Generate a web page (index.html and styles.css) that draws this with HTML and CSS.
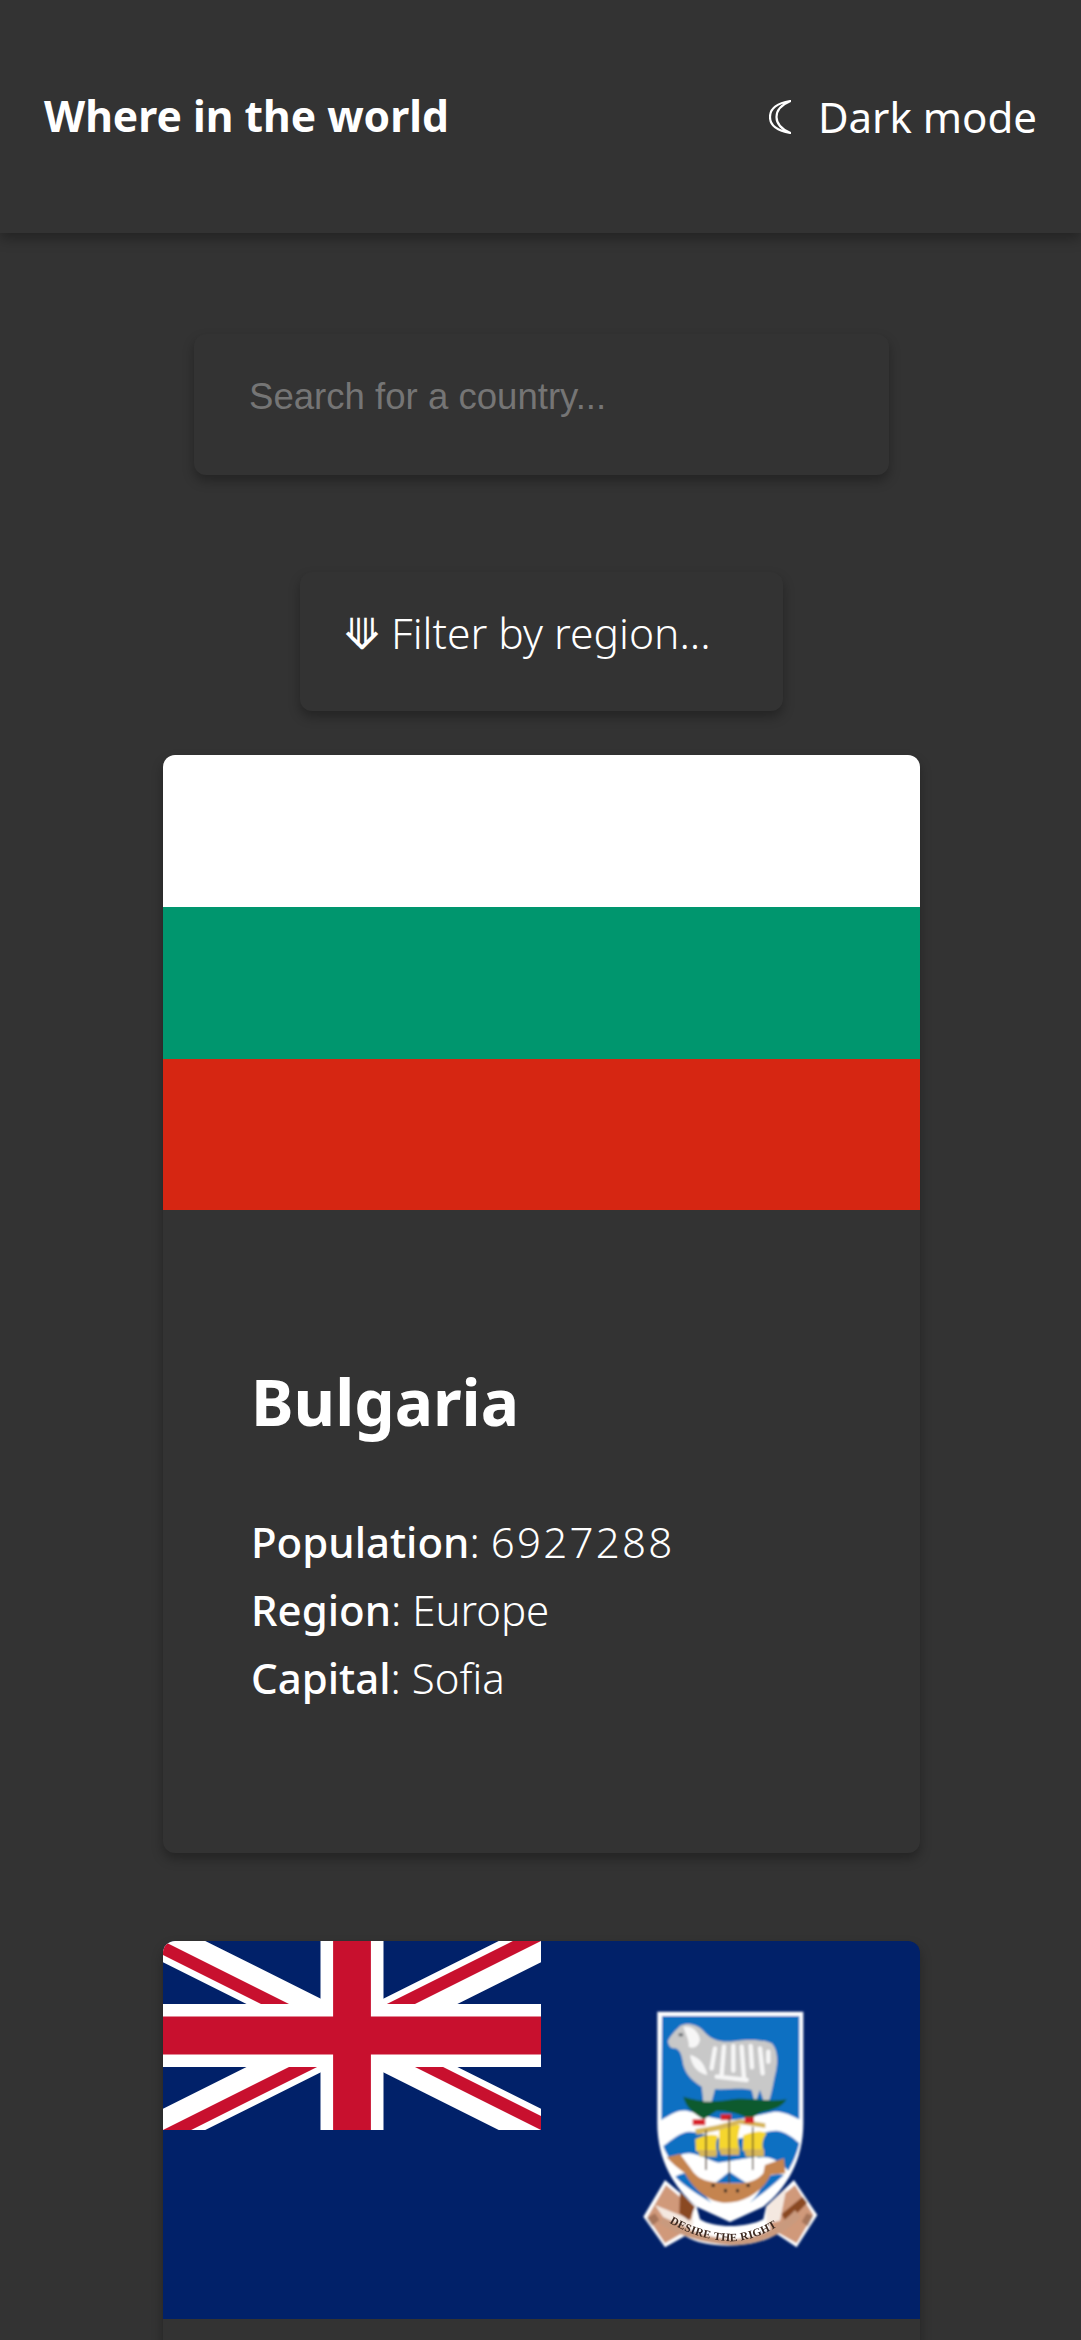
FILE: index.html
```html
<!DOCTYPE html>
<html lang="en">
<head>
<meta charset="utf-8">
<title>Where in the world</title>
<link rel="stylesheet" href="styles.css">
</head>
<body>
<div class="page">
  <header class="topbar">
    <h1 class="brand">Where in the world</h1>
    <button class="mode" type="button">
      <svg class="moon" viewBox="0 0 22 34" aria-hidden="true"><path d="M21.500 1C6 3.500 1 10 1 17S6 30.500 21.500 33C12 29 7.500 24 7.500 17S12 5 21.500 1Z" fill="none" stroke="#fff" stroke-width="2.200" stroke-linejoin="round"/></svg>
      <span>Dark mode</span>
    </button>
  </header>
  <main class="content">
    <input class="search" type="text" placeholder="Search for a country...">
    <button class="filter" type="button"><span class="arrow">⟱</span> Filter by region...</button>
    <article class="card">
      <svg class="flag" viewBox="0 0 757 455" role="img" aria-label="Flag of Bulgaria">
        <rect width="757" height="152" fill="#fff"/>
        <rect y="152" width="757" height="152" fill="#00966e"/>
        <rect y="304" width="757" height="151" fill="#d62612"/>
      </svg>
      <div class="card-body">
        <h2 class="country">Bulgaria</h2>
        <p class="fact"><b>Population</b>: <span class="num">6927288</span></p>
        <p class="fact"><b>Region</b>: Europe</p>
        <p class="fact"><b>Capital</b>: Sofia</p>
      </div>
    </article>
    <article class="card">
      <svg class="flag" viewBox="0 0 757 378" role="img" aria-label="Flag of the Falkland Islands">
        <defs>
          <clipPath id="canton"><rect width="60" height="30"/></clipPath>
          <clipPath id="diag"><path d="M30 15h30v15zv15h-30zh-30v-15zv-15h30z"/></clipPath>
          <filter id="soft" x="-5%" y="-5%" width="110%" height="110%"><feGaussianBlur stdDeviation="2.400"/></filter>
          <filter id="softer" x="-5%" y="-20%" width="110%" height="140%"><feGaussianBlur stdDeviation="1"/></filter>
        </defs>
        <rect width="757" height="378" fill="#012169"/>
        <g transform="scale(6.300)" clip-path="url(#canton)">
          <path d="M0 0L60 30M60 0L0 30" stroke="#fff" stroke-width="6"/>
          <path d="M0 0L60 30M60 0L0 30" clip-path="url(#diag)" stroke="#c8102e" stroke-width="4"/>
          <path d="M30 0v30M0 15h60" stroke="#fff" stroke-width="10"/>
          <path d="M30 0v30M0 15h60" stroke="#c8102e" stroke-width="6"/>
        </g>
        <g transform="translate(437 39) scale(.3333)">
          <g filter="url(#soft)">
            <path fill="#fff" d="M172 95H610V430C610 540 560 625 490 680L390 726L290 680C222 625 172 540 172 430Z"/>
            <path fill="#0a70c2" d="M186 108H598V418C570 405 545 392 520 396C470 405 420 420 390 420C350 420 300 402 260 392C235 388 210 405 184 420Z"/>
            <path fill="#0a70c2" d="M190 498C215 480 240 455 270 455C310 458 340 478 390 478C440 478 490 452 530 452C555 455 580 472 598 490C590 525 578 550 565 572C545 552 520 530 490 532C440 535 420 555 390 555C350 555 310 525 270 520C245 518 225 535 215 545C205 530 195 515 190 498Z"/>
            <path fill="#0a70c2" d="M226 590C245 578 265 575 285 590C300 625 315 650 335 668C295 645 255 620 226 590ZM450 668C490 640 520 615 552 585C530 580 510 585 495 595C485 625 470 650 450 668Z"/>
            <path fill="#0c5a2e" d="M250 350C300 365 340 368 400 358C450 352 510 368 560 358C545 385 510 392 480 398L450 418C420 400 380 392 350 392L312 418C285 402 258 385 250 350Z"/>
            <path fill="#c8c8c8" d="M204 182C212 165 228 150 240 138C262 126 292 134 310 152C330 178 360 188 400 184C440 178 490 178 515 190C535 210 535 250 524 290C520 310 515 340 508 360H490L480 330L470 358H462L455 330C420 322 390 330 345 328L335 365H310L305 320C280 305 258 285 250 255C245 225 240 205 222 205C212 205 204 195 204 182Z"/>
            <path fill="#f6f6f6" d="M250 140C275 135 298 155 300 180C296 200 280 208 266 200C268 180 258 165 250 140ZM270 225C295 230 315 250 322 285C295 280 275 260 270 225Z"/>
            <path fill="none" stroke="#f6f6f6" stroke-width="13" stroke-linecap="round" d="M345 205L335 265M372 200L365 285M400 198L400 272M425 200L432 295M452 198L456 262M480 205L488 280M505 215L505 245M350 290L440 300"/>
            <path fill="#6b7074" d="M236 160h13v9h-13z"/>
            <path fill="#fff" d="M250 530C285 520 320 535 345 550L470 530C495 550 495 590 470 610H300C275 590 258 560 250 530Z"/>
            <path fill="#0a70c2" d="M345 610L388 575L440 610Z"/>
            <path fill="#f5d62e" d="M286 478C310 466 335 460 354 468C346 490 348 508 352 522C325 515 300 520 288 512ZM358 445C380 438 405 430 422 436C412 465 412 490 420 512C400 505 375 508 356 512ZM430 466C450 460 475 448 500 460C485 480 485 500 492 518C470 510 445 514 428 512Z"/>
            <path fill="#d6b65a" d="M285 448L350 436L420 418L496 430V444L420 432L350 452L290 464Z"/>
            <path fill="#d6b65a" d="M292 510H350V530H300ZM358 505H418V525H362ZM432 508H492V530H438Z"/>
            <path fill="#d8222a" d="M278 418H316V436H278ZM362 403H394V421H362ZM434 412H462V430H434Z"/>
            <path fill="#c58450" d="M200 532L240 522L272 565C295 605 335 610 410 610C440 610 470 605 490 580L495 555L552 535L556 580L512 584C490 635 430 672 370 668C320 665 275 620 255 580C235 565 215 550 200 532Z"/>
            <path fill="none" stroke="#4c3a2a" stroke-width="4" d="M388 410V610M318 450V570M458 440V570"/>
            <path fill="#222" d="M335 612h9v9h-9zM372 628h9v9h-9zM408 628h9v9h-9zM440 612h9v9h-9z"/>
            <path fill="#fff" d="M195 600L290 680L300 718C340 745 440 745 490 718L498 680L582 600L652 705L590 802L530 762C470 805 320 810 255 768L195 802L130 710Z"/>
            <path fill="#d0997a" d="M198 615L280 685L272 745L195 790L142 712ZM585 615L640 705L590 790L510 745L502 685Z"/>
            <path fill="#f4e8e0" d="M165 675L282 722L272 748L190 712ZM498 680L560 622L540 722L500 732Z"/>
            <path fill="#8a4a24" d="M240 635L285 680L268 722L238 700ZM545 702L608 650L622 668L560 732Z"/>
            <path fill="#c99a7e" d="M190 712C260 750 310 770 390 778C460 778 530 750 585 690L603 712C540 775 460 796 390 796C310 790 240 770 178 730Z"/>
            <path fill="#5a3420" d="M140 715L165 700L178 720L155 738ZM620 700L640 708L625 740L605 725Z" opacity=".35"/>
          </g>
          <path id="motto" fill="none" d="M208 728C270 765 330 782 395 784C460 782 530 750 585 700"/>
          <text class="motto" filter="url(#softer)"><textPath href="#motto" startOffset="0">DESIRE THE RIGHT</textPath></text>
        </g>
      </svg>
      <div class="card-body"></div>
    </article>
  </main>
</div>
</body>
</html>
```
FILE: styles.css
```css
* { box-sizing: border-box; }
html, body { margin: 0; padding: 0; }
body {
  background: #333;
  color: #fff;
  font-family: "Noto Sans", Lato, sans-serif;
}
.page { height: 2340px; overflow: hidden; }
.topbar {
  position: relative;
  height: 233px;
  padding: 0 44px;
  display: flex;
  align-items: center;
  justify-content: space-between;
  background: #333;
  box-shadow: 0 6px 12px rgba(0, 0, 0, .3);
}
.brand { margin: 0 0 4px; font-size: 42.600px; font-weight: 700; }
.mode {
  display: flex;
  align-items: center;
  gap: 27px;
  padding: 0;
  border: 0;
  background: none;
  color: #fff;
  font: 400 42px "Noto Sans", Lato, sans-serif;
}
.moon { width: 22px; height: 34px; }
.content { display: flex; flex-direction: column; align-items: center; padding-left: 2px; }
.search {
  width: 695px;
  height: 141px;
  margin-top: 101px;
  padding: 0 55px 15px;
  border: 0;
  border-radius: 12px;
  outline: 0;
  background: #333;
  color: #fff;
  font: 36.600px "Liberation Sans", Arial, sans-serif;
  box-shadow: 0 6px 12px rgba(0, 0, 0, .3);
}
.search::placeholder { color: #757575; opacity: 1; }
.filter {
  width: 483px;
  height: 139px;
  margin-top: 97px;
  padding: 0 0 20px 44px;
  border: 0;
  border-radius: 12px;
  background: #333;
  color: #fff;
  text-align: left;
  font: 300 42.600px "Noto Sans", Lato, sans-serif;
  box-shadow: 0 6px 12px rgba(0, 0, 0, .3);
}
.arrow { font-family: "DejaVu Sans", sans-serif; }
.card {
  width: 757px;
  height: 1098px;
  margin-top: 44px;
  margin-bottom: 44px;
  border-radius: 12px;
  overflow: hidden;
  background: #333;
  box-shadow: 0 6px 12px rgba(0, 0, 0, .3);
}
.flag { display: block; width: 100%; height: auto; }
.card-body { padding: 148px 88px 0; }
.country { margin: 0 0 63px; font-size: 64px; font-weight: 700; line-height: 87px; }
.fact { margin: 0; font-size: 42px; font-weight: 300; line-height: 68px; }
.fact b { font-weight: 500; }
.num { letter-spacing: 2.300px; }
.motto { font: 700 34px "Liberation Serif", serif; letter-spacing: 1px; fill: #3e2a20; }
```
